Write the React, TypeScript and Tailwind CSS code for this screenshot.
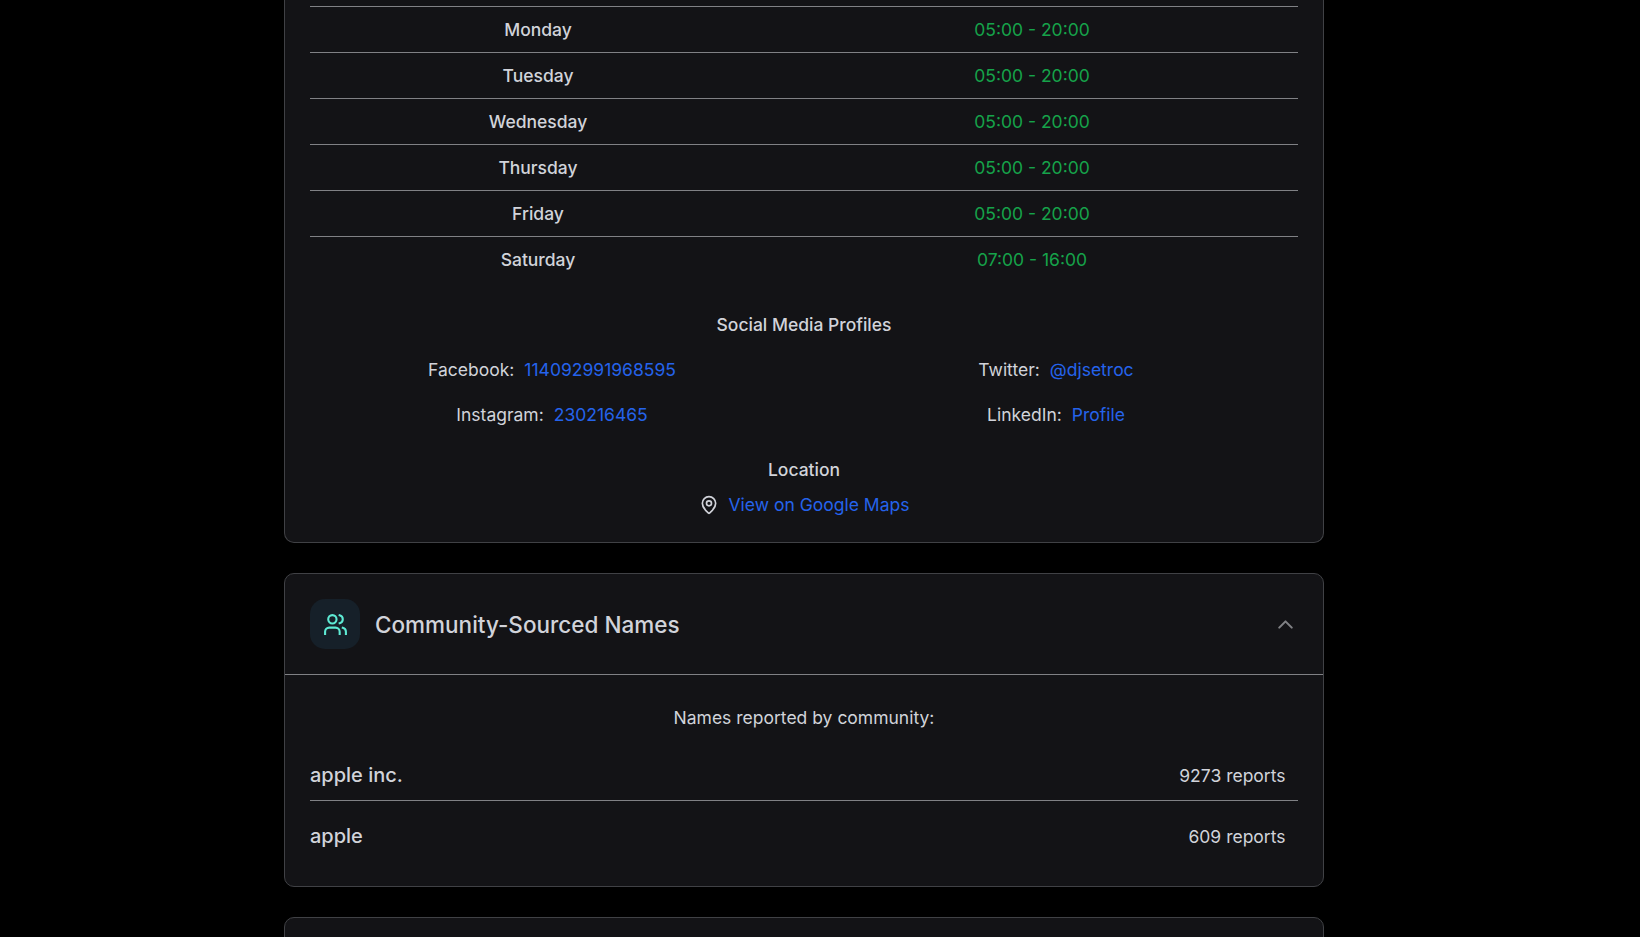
import React, { useState } from 'react';
import { ChevronUp, MapPin, Users } from 'lucide-react';

const CARD = 'rounded-[10px] border border-[#404145] bg-[#131316]';
const LINK = 'ml-2.5 text-[#2563eb]';

const hours = [
    { day: 'Monday', time: '05:00 - 20:00' },
    { day: 'Tuesday', time: '05:00 - 20:00' },
    { day: 'Wednesday', time: '05:00 - 20:00' },
    { day: 'Thursday', time: '05:00 - 20:00' },
    { day: 'Friday', time: '05:00 - 20:00' },
    { day: 'Saturday', time: '07:00 - 16:00' },
];

const profiles = [
    { label: 'Facebook', value: '114092991968595' },
    { label: 'Twitter', value: '@djsetroc' },
    { label: 'Instagram', value: '230216465' },
    { label: 'LinkedIn', value: 'Profile' },
];

const names = [
    { name: 'apple inc.', reports: 9273 },
    { name: 'apple', reports: 609 },
];

const BusinessCard = () => (
    <section className={`${CARD} rounded-t-none border-t-0 px-[25px] pt-1.5 pb-[25px]`}>
        <div>
            {hours.map(({ day, time }) => (
                <div key={day} className="grid grid-cols-2 border-t border-[#808185] py-2.5 text-center">
                    <span className="pr-[38px] font-medium">{day}</span>
                    <span className="pr-[38px] text-[#16a34a]">{time}</span>
                </div>
            ))}
        </div>

        <h3 className="mt-[30px] text-center font-medium">Social Media Profiles</h3>
        <div className="mt-5 grid grid-cols-2 gap-5 text-center">
            {profiles.map(({ label, value }) => (
                <div key={label}>
                    <span>{label}:</span>
                    <a href="#" className={LINK}>{value}</a>
                </div>
            ))}
        </div>

        <h3 className="mt-[30px] text-center font-medium">Location</h3>
        <div className="mt-2.5 flex items-center justify-center">
            <MapPin size={20} />
            <a href="#" className={LINK}>View on Google Maps</a>
        </div>
    </section>
);

const CommunityCard = () => {
    const [open, setOpen] = useState(true);

    return (
        <section className={CARD}>
            <button
                onClick={() => setOpen(!open)}
                className="flex w-full items-center border-b border-[#808185] p-[25px]"
            >
                <span className="flex size-[50px] items-center justify-center rounded-[15px] bg-[#162029]">
                    <Users size={25} strokeLinecap="square" className="text-[#5eead4]" />
                </span>
                <h2 className="ml-[15px] text-[22.5px] leading-[35px] font-medium">Community-Sourced Names</h2>
                <ChevronUp size={25} className={`ml-auto text-[#808185] ${open ? '' : 'rotate-180'}`} />
            </button>

            {open && (
                <div className="px-[25px] pt-[30px] pb-5">
                    <p className="mb-2.5 text-center">Names reported by community:</p>
                    {names.map(({ name, reports }) => (
                        <div
                            key={name}
                            className="flex items-center justify-between border-b border-[#808185] pt-5 pr-[12.5px] pb-2.5 last:border-b-0 last:pb-[15px]"
                        >
                            <span className="text-[20px] leading-[30px] font-medium">{name}</span>
                            <span>{reports} reports</span>
                        </div>
                    ))}
                </div>
            )}
        </section>
    );
};

export default function App() {
    return (
        <div className="h-[937px] overflow-hidden bg-black pr-8 font-['Inter',sans-serif] text-[17.5px] leading-[25px] text-[#d1d3da]">
            <main className="mx-auto flex w-[1040px] flex-col gap-[30px]">
                <BusinessCard />
                <CommunityCard />
                <section className={`${CARD} h-[100px]`} />
            </main>
        </div>
    );
}
